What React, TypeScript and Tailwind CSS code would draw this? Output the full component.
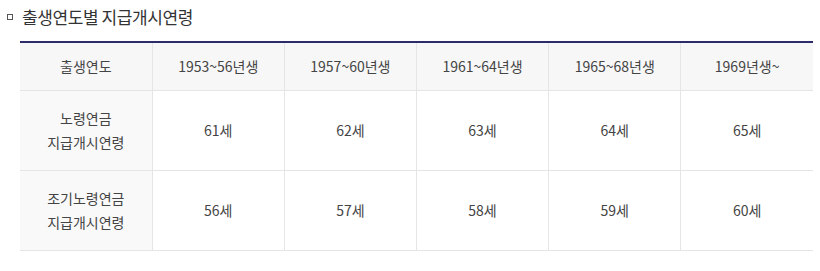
export default function App() {
  const headers = ['1953~56년생', '1957~60년생', '1961~64년생', '1965~68년생', '1969년생~']
  const rows = [
    { label: ['노령연금', '지급개시연령'], ages: ['61세', '62세', '63세', '64세', '65세'] },
    { label: ['조기노령연금', '지급개시연령'], ages: ['56세', '57세', '58세', '59세', '60세'] },
  ]

  return (
    <div className="min-h-[271px] bg-white pt-[5px] font-['Noto_Sans_CJK_KR',sans-serif]">
      <h2 className="flex h-[24px] items-center text-[17px] leading-[24px] tracking-[-0.4px] text-[#333]">
        <span className="ml-[7px] mr-[9px] inline-block h-[6px] w-[6px] border border-[#555]" />
        출생연도별 지급개시연령
      </h2>

      <table className="mt-[12px] ml-[20px] w-[793px] table-fixed border-collapse border-t-2 border-t-[#2c2b6b] text-[14px] text-[#444]">
        <thead>
          <tr className="h-[48px] bg-[#f7f7f7]">
            <th className="border-b border-[#e5e5e5] font-normal">출생연도</th>
            {headers.map((h) => (
              <th key={h} className="border-b border-l border-[#e5e5e5] font-normal">
                {h}
              </th>
            ))}
          </tr>
        </thead>
        <tbody>
          {rows.map((row) => (
            <tr key={row.label[0]} className="h-[80px]">
              <td className="border-b border-[#e5e5e5] bg-[#f9f9f9] text-center leading-[24px]">
                {row.label[0]}
                <br />
                {row.label[1]}
              </td>
              {row.ages.map((a) => (
                <td key={a} className="border-b border-l border-[#e5e5e5] text-center">
                  {a}
                </td>
              ))}
            </tr>
          ))}
        </tbody>
      </table>
    </div>
  )
}
